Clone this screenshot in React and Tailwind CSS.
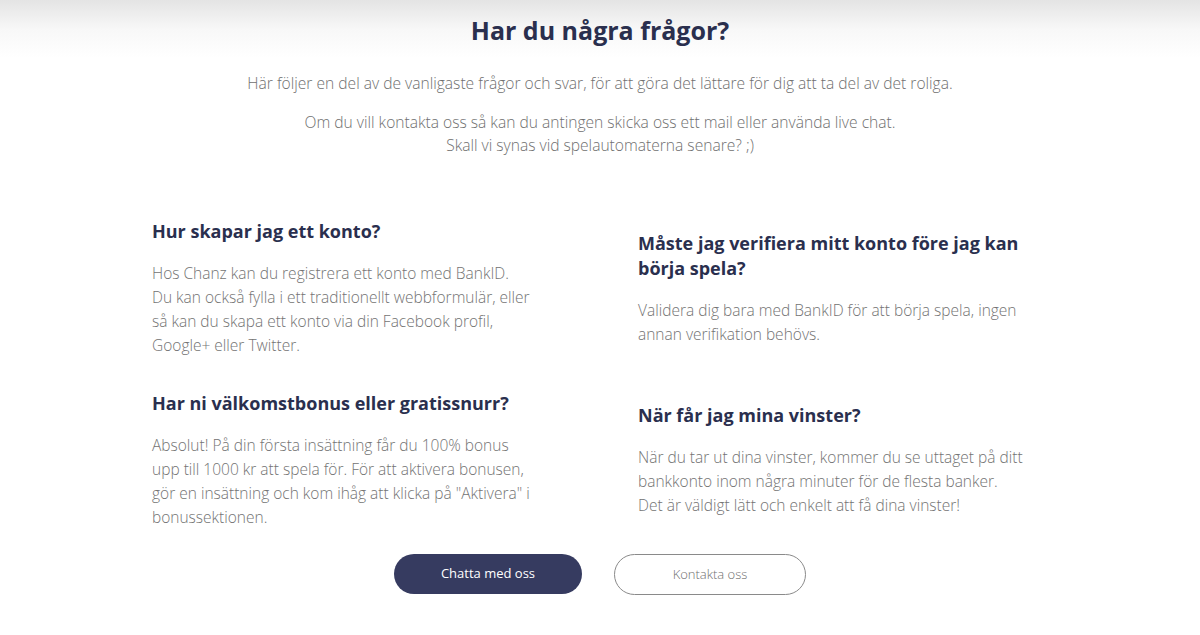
const faqs = [
  {
    q: ["Hur skapar jag ett konto?"],
    a: [
      "Hos Chanz kan du registrera ett konto med BankID.",
      "Du kan också fylla i ett traditionellt webbformulär, eller",
      "så kan du skapa ett konto via din Facebook profil,",
      "Google+ eller Twitter.",
    ],
  },
  {
    q: ["Måste jag verifiera mitt konto före jag kan", "börja spela?"],
    a: ["Validera dig bara med BankID för att börja spela, ingen", "annan verifikation behövs."],
  },
  {
    q: ["Har ni välkomstbonus eller gratissnurr?"],
    a: [
      "Absolut! På din första insättning får du 100% bonus",
      "upp till 1000 kr att spela för. För att aktivera bonusen,",
      'gör en insättning och kom ihåg att klicka på "Aktivera" i',
      "bonussektionen.",
    ],
  },
  {
    q: ["När får jag mina vinster?"],
    a: [
      "När du tar ut dina vinster, kommer du se uttaget på ditt",
      "bankkonto inom några minuter för de flesta banker.",
      "Det är väldigt lätt och enkelt att få dina vinster!",
    ],
  },
];

function Lines({ lines }) {
  return lines.map((l, i) => (
    <span key={i} className="block whitespace-nowrap">
      {l}
    </span>
  ));
}

export default function App() {
  return (
    <div
      className="min-h-[635px] w-[1200px] bg-white bg-[linear-gradient(to_bottom,#e4e4e4_0px,#f8f8f8_30px,#ffffff_58px)] bg-no-repeat pb-10 pt-[14px]"
      style={{ fontFamily: '"Open Sans", "Noto Sans", sans-serif' }}
    >
      <h1 className="text-center text-[25px] font-bold leading-[32px] text-[#2a2f4e]">Har du några frågor?</h1>
      <p className="mt-[25px] text-center text-[15.6px] font-light leading-[24px] text-[#6f6f6f]">
        Här följer en del av de vanligaste frågor och svar, för att göra det lättare för dig att ta del av det roliga.
      </p>
      <p className="mt-[16px] text-center text-[15.6px] font-light leading-[23px] text-[#6f6f6f]">
        Om du vill kontakta oss så kan du antingen skicka oss ett mail eller använda live chat.
        <br />
        Skall vi synas vid spelautomaterna senare? ;)
      </p>

      <div className="mt-[62px] grid grid-cols-[486px_1fr] items-center gap-y-[34px] pl-[152px]">
        {faqs.map((f, i) => (
          <div key={i}>
            <h3 className="text-[18px] font-bold leading-[25px] text-[#2a2f4e]">
              <Lines lines={f.q} />
            </h3>
            <p className="mt-[17px] text-[15.5px] font-light leading-[24px] text-[#737373]">
              <Lines lines={f.a} />
            </p>
          </div>
        ))}
      </div>

      <div className="mt-[25px] flex justify-center gap-[32px]">
        <button className="h-[40px] w-[188px] rounded-full bg-[#363b60] text-[13px] text-white">Chatta med oss</button>
        <button className="h-[41px] w-[192px] rounded-full border border-[#8a8a8a] bg-white text-[13px] font-light text-[#6f6f6f]">
          Kontakta oss
        </button>
      </div>
    </div>
  );
}
